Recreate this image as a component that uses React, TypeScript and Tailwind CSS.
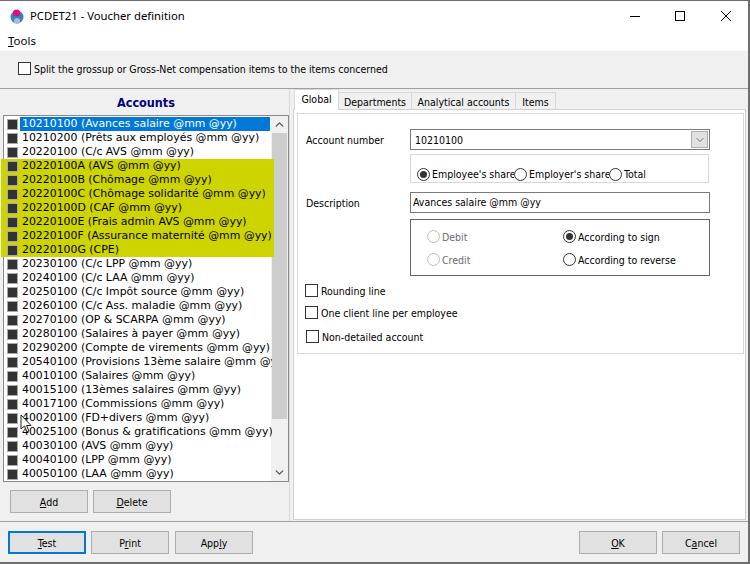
import { ChevronDown, ChevronUp } from "lucide-react";

const accounts = [
  { text: "10210100 (Avances salaire @mm @yy)", selected: true },
  { text: "10210200 (Prêts aux employés @mm @yy)" },
  { text: "20220100 (C/c AVS @mm @yy)" },
  { text: "20220100A (AVS @mm @yy)", marked: true },
  { text: "20220100B (Chômage @mm @yy)", marked: true },
  { text: "20220100C (Chômage solidarité @mm @yy)", marked: true },
  { text: "20220100D (CAF @mm @yy)", marked: true },
  { text: "20220100E (Frais admin AVS @mm @yy)", marked: true },
  { text: "20220100F (Assurance maternité @mm @yy)", marked: true },
  { text: "20220100G (CPE)", marked: true },
  { text: "20230100 (C/c LPP @mm @yy)" },
  { text: "20240100 (C/c LAA @mm @yy)" },
  { text: "20250100 (C/c Impôt source @mm @yy)" },
  { text: "20260100 (C/c Ass. maladie @mm @yy)" },
  { text: "20270100 (OP & SCARPA @mm @yy)" },
  { text: "20280100 (Salaires à payer @mm @yy)" },
  { text: "20290200 (Compte de virements @mm @yy)" },
  { text: "20540100 (Provisions 13ème salaire @mm @yy)" },
  { text: "40010100 (Salaires @mm @yy)" },
  { text: "40015100 (13èmes salaires @mm @yy)" },
  { text: "40017100 (Commissions @mm @yy)" },
  { text: "40020100 (FD+divers @mm @yy)" },
  { text: "40025100 (Bonus & gratifications @mm @yy)" },
  { text: "40030100 (AVS @mm @yy)" },
  { text: "40040100 (LPP @mm @yy)" },
  { text: "40050100 (LAA @mm @yy)" },
];

const Check = ({ label, className = "" }: { label: string; className?: string }) => (
  <div className={`flex items-center gap-[3px] h-[13px] ${className}`}>
    <span className="w-[13px] h-[13px] border border-[#333] bg-white shrink-0" />
    <span className="pt-px">{label}</span>
  </div>
);

const Radio = ({ label, on, off, className = "" }: { label: string; on?: boolean; off?: boolean; className?: string }) => (
  <div className={`flex items-center gap-[2px] whitespace-nowrap overflow-hidden ${off ? "text-[#6d6d6d]" : ""} ${className}`}>
    <span
      className={`w-[13px] h-[13px] rounded-full border shrink-0 flex items-center justify-center ${
        off ? "border-[#bcbcbc]" : "border-[#333]"
      }`}
    >
      {on && <span className="w-[7px] h-[7px] rounded-full bg-[#333]" />}
    </span>
    <span>{label}</span>
  </div>
);

const Btn = ({ children, primary, className = "" }: { children: React.ReactNode; primary?: boolean; className?: string }) => (
  <button
    className={`h-[23px] w-[78px] pt-px bg-[#e1e1e1] flex items-center justify-center ${
      primary ? "border-2 border-[#0078d7]" : "border border-[#adadad]"
    } ${className}`}
  >
    {children}
  </button>
);

export default function App() {
  return (
    <div className="relative w-[750px] h-[564px] overflow-hidden bg-[#6e6e6e] text-[10.5px] leading-[14px] text-black font-['DejaVu_Sans_Condensed','DejaVu_Sans',sans-serif]">
      <div className="w-[748px] h-[561px] mt-px flex flex-col bg-[#f0f0f0]">
        {/* Title bar */}
        <div className="h-[32px] bg-white flex items-center shrink-0 pb-[3px]">
          <svg width="16" height="16" viewBox="0 0 16 16" className="ml-[9px] shrink-0">
            <circle cx="8" cy="9" r="6.5" fill="#3f7fb8" />
            <circle cx="8" cy="13" r="3" fill="#9fc4dc" />
            <circle cx="7.5" cy="5" r="3.6" fill="#e0107a" />
          </svg>
          <span className="ml-[5px] font-['Noto_Sans',sans-serif] text-[11.3px]">PCDET21 - Voucher definition</span>
          <div className="ml-auto flex items-center mr-[17px] gap-[35px]">
            <svg width="10" height="10" viewBox="0 0 10 10">
              <path d="M0 5.5H10" stroke="#000" strokeWidth="1" />
            </svg>
            <svg width="10" height="10" viewBox="0 0 10 10">
              <rect x="0.5" y="0.5" width="9" height="9" fill="none" stroke="#000" strokeWidth="1" />
            </svg>
            <svg width="10" height="10" viewBox="0 0 10 10" className="ml-px">
              <path d="M0 0L10 10M10 0L0 10" stroke="#000" strokeWidth="1" />
            </svg>
          </div>
        </div>
        {/* Menu */}
        <div className="h-[17px] bg-white pl-[8px] pb-px shrink-0 flex items-center font-['Noto_Sans',sans-serif] text-[11.5px]">
          <span><u>T</u>ools</span>
        </div>
        <div className="h-[1px] bg-[#fafafa] shrink-0" />

        {/* Option strip */}
        <div className="h-[38px] shrink-0 pl-[18px] pb-[2px] flex items-center border-b border-[#a0a0a0]">
          <Check label="Split the grossup or Gross-Net compensation items to the items concerned" />
        </div>

        {/* Panels */}
        <div className="flex-1 flex min-h-0">
          <div className="w-[290px] pl-[3px] shrink-0 flex flex-col border-r border-[#d8d8d8]">
            <div className="h-[26px] pt-px shrink-0 flex items-center justify-center text-[12.5px] font-bold text-[#000080]">
              Accounts
            </div>
            <div className="h-[367px] shrink-0 relative border border-[#8a8a8a] bg-white">
              <div className="pt-px h-full font-['DejaVu_Sans',sans-serif] text-[10.9px] overflow-y-clip">
                {accounts.map((a) => (
                  <div
                    key={a.text}
                    className={`relative z-10 h-[14px] flex items-center whitespace-nowrap ${
                      a.marked ? "bg-[#cdd400] -ml-[3px] w-[273px] pl-[3px]" : a.selected ? "w-[266px]" : "w-[268px]"
                    }`}
                  >
                    <span className="ml-[3px] w-[11px] h-[11px] border border-[#aaa] bg-[#333] shrink-0" />
                    <span className={`ml-[2px] pl-[2px] h-[14px] leading-[14px] flex-1 overflow-hidden ${a.selected ? "bg-[#0078d7] text-white" : ""}`}>
                      {a.text}
                    </span>
                  </div>
                ))}
              </div>
              {/* Scrollbar */}
              <div className="absolute right-0 top-0 bottom-0 w-[17px] bg-[#f0f0f0] flex flex-col items-center">
                <ChevronUp size={13} strokeWidth={2.5} className="mt-[2px] text-[#555] shrink-0" />
                <div className="w-[15px] h-[286px] mt-[2px] bg-[#cdcdcd]" />
                <ChevronDown size={13} strokeWidth={2.5} className="mt-auto mb-[2px] text-[#555]" />
              </div>
            </div>
            <div className="flex gap-[5px] pl-[7px] pt-[8px]">
              <Btn><span><u>A</u>dd</span></Btn>
              <Btn><span><u>D</u>elete</span></Btn>
            </div>
          </div>

          {/* Right tabs */}
          <div className="flex-1 pl-[3px] pr-[2px] min-w-0">
            <div className="flex items-end h-[21px] pl-px">
              <div className="relative z-10 h-[21px] w-[45px] bg-white border border-b-0 border-[#d9d9d9] flex items-center justify-center pb-[2px]">Global</div>
              {[
                { t: "Departments", w: "w-[73px]" },
                { t: "Analytical accounts", w: "w-[104px]" },
                { t: "Items", w: "w-[40px]" },
              ].map(({ t, w }) => (
                <div key={t} className={`h-[18px] pt-px ${w} bg-[#f0f0f0] border border-l-0 border-[#d9d9d9] flex items-center justify-center`}>{t}</div>
              ))}
            </div>
            <div className="h-[411px] bg-white border border-[#d0d0d0] -mt-px relative pl-[3px] pr-px pt-[3px]">
              <div className="border border-[#d9d9d9] h-[241px] pl-[8px] pr-[7px] pt-[15px] flex flex-col">
                <div className="flex items-center h-[21px]">
                  <span className="w-[104px] shrink-0">Account number</span>
                  <div className="w-[300px] h-[21px] border border-[#7a7a7a] flex items-center pl-[4px] pr-px">
                    <span>10210100</span>
                    <span className="ml-auto w-[17px] h-[17px] bg-[#e1e1e1] border border-[#adadad] flex items-center justify-center">
                      <ChevronDown size={12} strokeWidth={1} />
                    </span>
                  </div>
                </div>
                <div className="ml-[104px] w-[299px] h-[29px] mt-[4px] border border-[#d9d9d9] flex items-end pl-[6px] pb-[1px]">
                  <Radio on label="Employee's share" className="w-[97px]" />
                  <Radio label="Employer's share" className="w-[95px]" />
                  <Radio label="Total" />
                </div>
                <div className="flex items-center h-[21px] mt-[9px]">
                  <span className="w-[104px] shrink-0">Description</span>
                  <div className="w-[300px] h-[21px] border border-[#7a7a7a] flex items-center pl-[2px] pb-px">Avances salaire @mm @yy</div>
                </div>
                <div className="ml-[104px] w-[300px] h-[57px] mt-[6px] border border-[#646464] grid grid-cols-[136px_1fr] grid-rows-2 pl-[16px] pt-[5px] pb-[4px] items-center">
                  <Radio off label="Debit" />
                  <Radio on label="According to sign" />
                  <Radio off label="Credit" />
                  <Radio label="According to reverse" className="w-[113px]" />
                </div>
                <Check label="Rounding line" className="mt-[8px] -ml-px" />
                <Check label="One client line per employee" className="mt-[9px] -ml-px" />
                <Check label="Non-detailed account" className="mt-[11px]" />
              </div>
            </div>
          </div>
        </div>

        {/* Footer */}
        <div className="h-[41px] shrink-0 border-t border-[#a0a0a0] flex items-center pl-[8px] pr-[8px] pt-[1px]">
          <Btn primary><span><u>T</u>est</span></Btn>
          <Btn className="ml-[5px]"><span>P<u>r</u>int</span></Btn>
          <Btn className="ml-[6px]"><span>App<u>l</u>y</span></Btn>
          <Btn className="ml-auto"><span><u>O</u>K</span></Btn>
          <Btn className="ml-[5px]"><span>C<u>a</u>ncel</span></Btn>
        </div>
      </div>

      {/* Mouse pointer */}
      <svg width="13" height="20" viewBox="0 0 13 20" className="absolute left-[20px] top-[414px] z-20">
        <path d="M1 1 L1 15 L4.5 12 L7 18 L9 17 L6.5 11.5 L11 11.5 Z" fill="#fff" stroke="#222" strokeWidth="1" />
      </svg>
    </div>
  );
}
